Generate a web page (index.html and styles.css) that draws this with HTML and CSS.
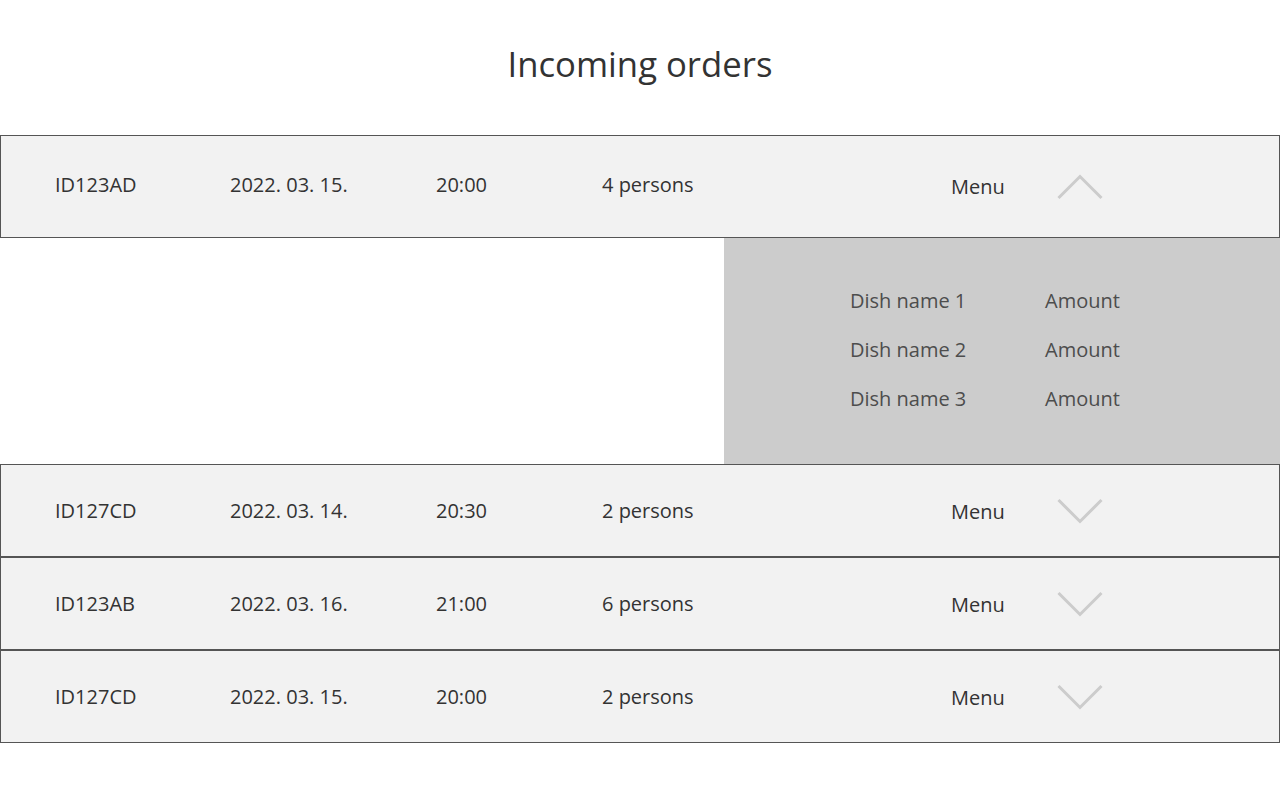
FILE: index.html
```html
<!DOCTYPE html>
<html lang="en">
<head>
<meta charset="utf-8">
<title>Incoming orders</title>
<link rel="stylesheet" href="styles.css">
</head>
<body>
<h1 class="title">Incoming orders</h1>
<div class="orders">
  <div class="order order--open">
    <span class="cell">ID123AD</span>
    <span class="cell">2022. 03. 15.</span>
    <span class="cell">20:00</span>
    <span class="cell">4 persons</span>
    <span class="cell menu">Menu</span>
    <svg class="chev chev--up" width="46" height="26" viewBox="0 0 46 26"><polyline points="1.5,24 23,2.5 44.5,24" fill="none" stroke="#cccccc" stroke-width="3"/></svg>
  </div>
  <div class="details">
    <div class="dishes">
      <span>Dish name 1</span><span>Amount</span>
      <span>Dish name 2</span><span>Amount</span>
      <span>Dish name 3</span><span>Amount</span>
    </div>
  </div>
  <div class="order">
    <span class="cell">ID127CD</span>
    <span class="cell">2022. 03. 14.</span>
    <span class="cell">20:30</span>
    <span class="cell">2 persons</span>
    <span class="cell menu">Menu</span>
    <svg class="chev" width="46" height="26" viewBox="0 0 46 26"><polyline points="1.5,2 23,23.5 44.5,2" fill="none" stroke="#cccccc" stroke-width="3"/></svg>
  </div>
  <div class="order">
    <span class="cell">ID123AB</span>
    <span class="cell">2022. 03. 16.</span>
    <span class="cell">21:00</span>
    <span class="cell">6 persons</span>
    <span class="cell menu">Menu</span>
    <svg class="chev" width="46" height="26" viewBox="0 0 46 26"><polyline points="1.5,2 23,23.5 44.5,2" fill="none" stroke="#cccccc" stroke-width="3"/></svg>
  </div>
  <div class="order">
    <span class="cell">ID127CD</span>
    <span class="cell">2022. 03. 15.</span>
    <span class="cell">20:00</span>
    <span class="cell">2 persons</span>
    <span class="cell menu">Menu</span>
    <svg class="chev" width="46" height="26" viewBox="0 0 46 26"><polyline points="1.5,2 23,23.5 44.5,2" fill="none" stroke="#cccccc" stroke-width="3"/></svg>
  </div>
</div>
</body>
</html>
```
FILE: styles.css
```css
html, body {
  margin: 0;
  padding: 0;
  background: #ffffff;
}
body {
  font-family: "Open Sans", "Noto Sans", sans-serif;
  color: #333333;
}
.title {
  margin: 0;
  padding-top: 40px;
  margin-bottom: 47px;
  font-size: 34.7px;
  line-height: 48px;
  font-weight: 400;
  text-align: center;
  color: #333333;
}
.orders {
  display: flex;
  flex-direction: column;
}
.order {
  display: grid;
  grid-template-columns: 175px 206px 166px 349px 106px 46px;
  align-items: center;
  box-sizing: border-box;
  height: 93px;
  padding-left: 54px;
  background: #f2f2f2;
  border: 1px solid #555555;
  font-size: 20px;
  line-height: 26px;
}
.order--open {
  height: 103px;
  padding-bottom: 3px;
}
.cell {
  white-space: nowrap;
}
.menu {
  padding-top: 3px;
}
.chev {
  display: block;
}
.chev--up {
  margin-top: 3px;
}
.details {
  margin-left: 724px;
  height: 226px;
  background: #cccccc;
  box-sizing: border-box;
  padding: 38px 0 0 126px;
}
.dishes {
  display: grid;
  grid-template-columns: 195px auto;
  grid-auto-rows: 49px;
  align-items: center;
  font-size: 20px;
  color: #4d4d4d;
}
```
